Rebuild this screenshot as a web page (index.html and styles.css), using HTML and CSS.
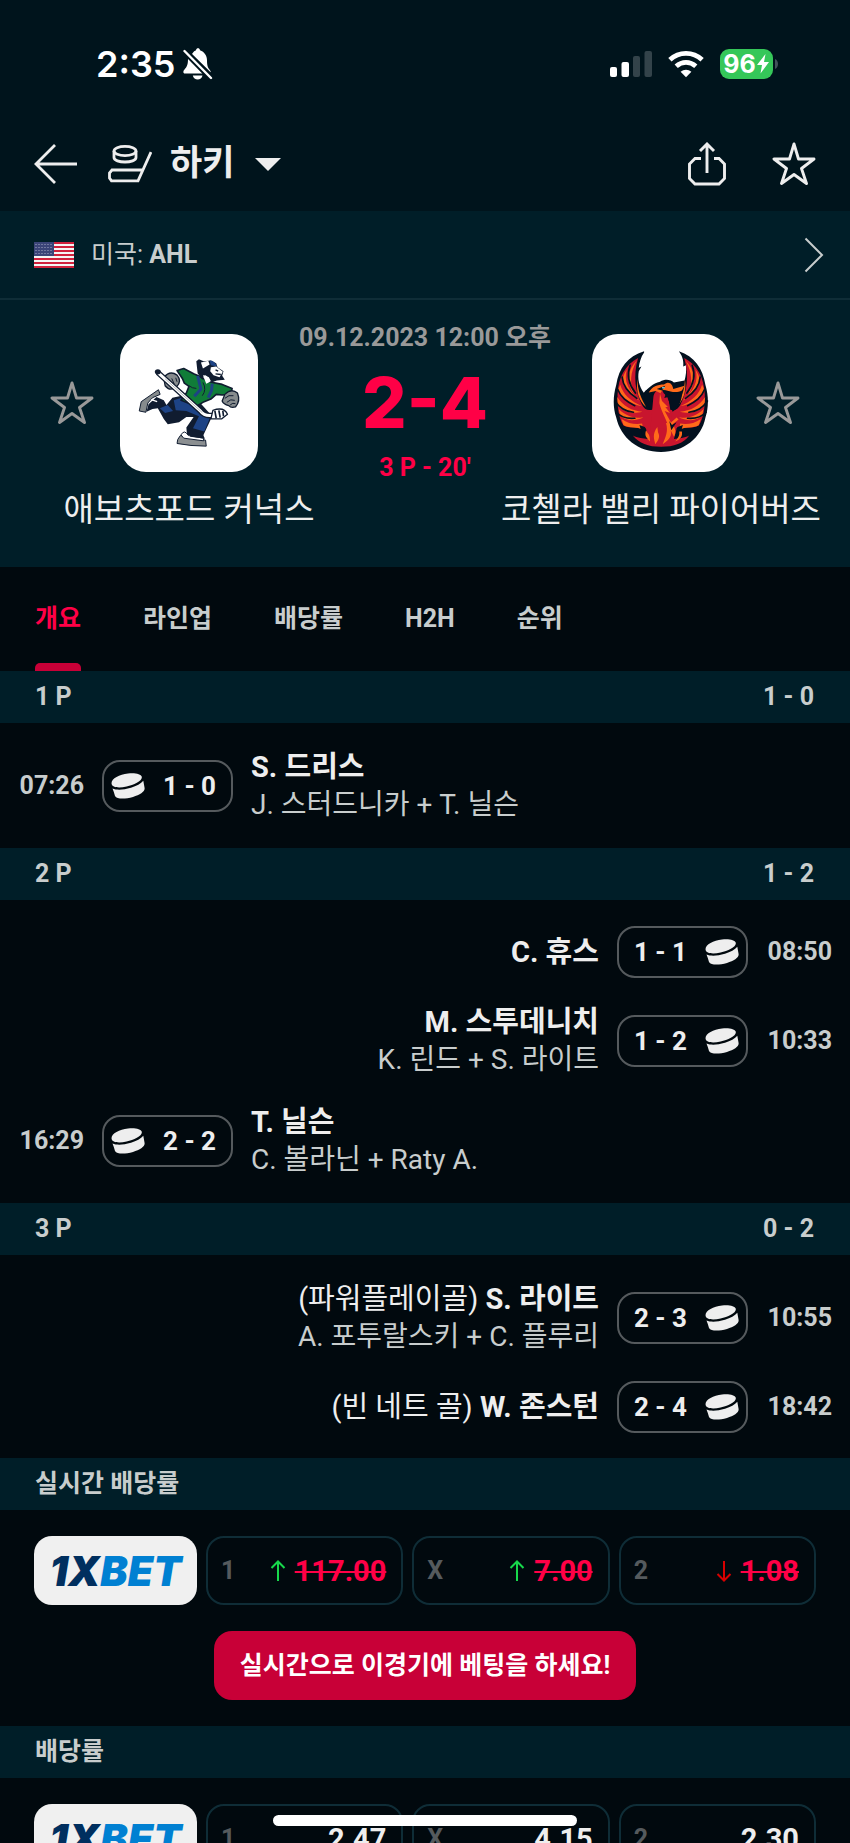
FILE: index.html
```html
<!DOCTYPE html>
<html lang="ko">
<head>
<meta charset="utf-8">
<meta name="viewport" content="width=device-width, initial-scale=1">
<title>하키 - AHL</title>
<link rel="stylesheet" href="styles.css">
</head>
<body>
<svg class="defs" aria-hidden="true">
  <symbol id="star" viewBox="0 0 44 44"><path d="M22 2 L26.500 17 H42 L29.500 26.500 L34.500 41.500 L22 32.500 L9.500 41.500 L14.500 26.500 L2 17 H17.500 Z" fill="none" stroke="currentColor" stroke-width="2.900" stroke-linejoin="round"/></symbol>
  <symbol id="puck" viewBox="0 0 34 26"><path d="M.6 10.800C-.3 6 8 1.300 17 .4c7-.8 13 .4 13.800 3.400C31.600 8 23 12 15.600 13.600 8 15.200 1.200 14.800.6 10.800Z"/><path d="M1.500 15.500c4.500 1.900 11 1.400 18.500-.8 5.500-1.700 10-4 12.300-6.900l1.300 7.200c.5 3.500-4.500 6.800-11.600 8.900C13.500 26.200 5.800 26 4 22.900L2.800 19Z"/></symbol>
  <symbol id="up" viewBox="0 0 16 22"><path d="M8 21V1.500M1.500 8 8 1.500 14.500 8" fill="none" stroke="currentColor" stroke-width="2"/></symbol>
  <symbol id="down" viewBox="0 0 16 22"><path d="M8 1v19.500M1.500 14 8 20.500 14.500 14" fill="none" stroke="currentColor" stroke-width="2"/></symbol>
</svg>

<div class="status">
  <div class="status-side">
    <span class="clock">2:35</span>
    <svg class="bell" viewBox="0 0 30 32"><path d="M9 6C10.500 3.500 12 2.800 13 2.300 13.300.9 14 .3 15 .3s1.700.6 2 2c4.500 1.500 7 5.500 7 10 0 5 .8 7.500 2.800 9.700.8.900 1 1.600.8 2.200ZM5 10.500 19.600 25.500H2C-.2 25.500 0 23 1.300 21.700 4.300 18.700 5 16 5 10.500ZM9.800 27.500h9.700c-.5 2.600-2.500 4-4.800 4s-4.400-1.400-4.900-4Z" fill="#fff"/><path d="M1.500 3 28 30" stroke="#00141c" stroke-width="6"/><path d="M1.500 3 28 30" stroke="#fff" stroke-width="2.400" stroke-linecap="round"/></svg>
  </div>
  <div class="status-side">
    <svg class="signal" viewBox="0 0 42 28"><rect y="17" width="7" height="10" rx="2" fill="#fff"/><rect x="11.500" y="12" width="7.500" height="15" rx="2" fill="#fff"/><rect x="23" y="6" width="7" height="21" rx="2" fill="#33434a"/><rect x="34.500" y="1" width="7.500" height="26" rx="2" fill="#33434a"/></svg>
    <svg class="wifi" viewBox="0 0 36 28"><g fill="none" stroke="#fff" stroke-width="4.800"><path d="M1.900 9.800C11 1.300 25 1.300 34.100 9.800"/><path d="M8.200 16.200c5.800-5.200 13.800-5.200 19.600 0"/></g><path d="M18 27.200 12.600 21.700c3.200-2.700 7.600-2.700 10.800 0Z" fill="#fff"/></svg>
    <div class="battery"><span>96</span><svg class="bolt" viewBox="0 0 14 20"><path d="M9.500 0 1 11h5L4.500 19.500 13 8H8Z" fill="#fff"/></svg></div>
    <svg class="nub" viewBox="0 0 4 10"><path d="M0 0c4 1.500 4 8.500 0 10Z" fill="#42525a"/></svg>
  </div>
</div>

<header class="topbar">
  <button class="icon-btn" aria-label="뒤로"><svg class="back" viewBox="0 0 44 40"><path d="M21 1 2 20l19 19M2 20h41" fill="none" stroke="#eee" stroke-width="2.800"/></svg></button>
  <button class="sport">
    <svg class="hockey" viewBox="0 0 44 38"><g fill="none" stroke="#eee" stroke-width="2.800"><ellipse cx="17" cy="6" rx="11" ry="4.600"/><path d="M6 6v6.500c0 6 22 6 22 0V6M43 7 30 35.800H3.500L1.500 33v-5l2.500-3h31"/></g></svg>
    <span>하키</span>
    <svg class="caret" viewBox="0 0 26 13"><path d="M0 0h26L13 13Z" fill="#eee"/></svg>
  </button>
  <button class="icon-btn push" aria-label="공유"><svg class="share" viewBox="0 0 38 44"><g fill="none" stroke="#eee" stroke-width="2.900"><path d="M13 16.500H7L1.500 22v14.500L7 42h24l5.500-5.500V22L31 16.500h-5M19 31V2M12 9l7-7 7 7"/></g></svg></button>
  <button class="icon-btn" aria-label="즐겨찾기"><svg class="star"><use href="#star"/></svg></button>
</header>

<main class="content">
  <a class="league" href="#">
    <svg class="flag" viewBox="0 0 40 26"><rect width="40" height="26" fill="#f4f4f4"/><path d="M0 1h40M0 5h40M0 9h40M0 13h40M0 17h40M0 21h40M0 25h40" stroke="#d0203c" stroke-width="2"/><rect width="20" height="14" fill="#3a4478"/><path d="M1.500 2.500h18M1.500 5.500h18M1.500 8.500h18M1.500 11.500h18" stroke="#a7abc6" stroke-width="1" stroke-dasharray="1 2"/></svg>
    <span>미국: <b>AHL</b></span>
    <svg class="chev" viewBox="0 0 20 36"><path d="M1.500 1.500 18 18 1.500 34.500" fill="none" stroke="#c8cdcd" stroke-width="2"/></svg>
  </a>

  <section class="match">
    <div class="match-top">
      <div class="team">
        <button class="icon-btn dim" aria-label="애보츠포드 커넉스 즐겨찾기"><svg class="star"><use href="#star"/></svg></button>
        <svg class="crest" viewBox="14 14 416 416">
          <g stroke-linejoin="round">
            <path d="M72 246 78 218 130 182 135 196 112 206 98 222 92 250Z" fill="#868b8d" stroke="#101c30" stroke-width="3"/>
            <path d="M94 248 100 226 124 204 146 214 154 228 172 206 200 200 256 222 292 262 262 326 216 318 214 296 236 264 214 264 192 280 158 286 146 270 128 238 112 240Z" fill="#101c30"/>
            <path d="M108 212l18 6" stroke="#fff" stroke-width="4"/>
            <path d="M134 238 158 228 174 246 150 252ZM176 214 200 206 252 236 286 264 268 308 234 298 252 262 214 246 182 244Z" fill="#1d4385"/>
            <path d="M186 124 206 118 236 134 250 140 282 158 322 166 352 178 348 196 322 198 304 196 288 210 264 220 244 232 198 214 214 192 222 172 208 162 202 148Z" fill="#107c38" stroke="#101c30" stroke-width="5"/>
            <path d="M248 140 258 180 238 202M292 164 290 184 280 206" fill="none" stroke="#1d4385" stroke-width="9"/>
            <path d="M222 170q10 8 22 8M264 160q12 22-2 40" fill="none" stroke="#101c30" stroke-width="3"/>
            <path d="M244 96 252 90 266 96 288 94 304 102 308 114 326 126 322 140 330 152 306 154 290 160 282 144 270 138 262 152 248 132Z" fill="#101c30"/>
            <path d="M258 100 280 95 284 106 264 118ZM264 138l10 2 12 18-12 6Z" fill="#fff"/>
            <path d="M284 94q16 0 22 18l-18-4Z" fill="#1d4385"/>
            <path d="M288 114 304 112 324 128 314 144 296 138 286 126Z" fill="#fff"/>
            <path d="M302 122l8 4M302 134 318 136" stroke="#101c30" stroke-width="4"/>
            <path d="M146 146q18-24 40-8 16 18-2 36-20 14-34-4Z" fill="#868b8d" stroke="#101c30" stroke-width="4"/>
            <path d="M158 154l10 16M170 148l8 18M182 146l4 12" stroke="#101c30" stroke-width="3"/>
            <path d="M330 196q20-20 38-4 10 24-6 42-14 4-20-4-16-4-20-14Z" fill="#868b8d" stroke="#101c30" stroke-width="4"/>
            <path d="M330 208q12-12 26-8M336 220q12-12 24-6M346 228q8-8 16-4" fill="none" stroke="#101c30" stroke-width="3"/>
            <path d="M128 130 256 246q10 14 28 14h32" fill="none" stroke="#101c30" stroke-width="17"/>
            <path d="M130 132 256 246q10 14 28 14h30" fill="none" stroke="#fff" stroke-width="9"/>
            <path d="M150 149 262 251" stroke="#8c9294" stroke-width="2"/>
            <path d="M294 244q34-12 44 12l-18 14-32 0Z" fill="#fff" stroke="#101c30" stroke-width="4"/>
            <path d="M300 246l4 22M312 244l4 22M324 246l2 16" stroke="#101c30" stroke-width="5"/>
            <ellipse cx="128" cy="128" rx="9" ry="8" fill="#101c30"/>
            <path d="M188 332 196 320 272 334 274 352Q226 352 186 344Z" fill="#8b8f91" stroke="#101c30" stroke-width="3"/>
            <path d="M198 318q10-18 22 2l46 8 0 8-60-8Z" fill="#fff" stroke="#101c30" stroke-width="3"/>
            <path d="M218 304 262 312 270 330 226 324Z" fill="#101c30"/>
          </g>
        </svg>
      </div>
      <div class="result">
        <span class="date">09.12.2023 12:00 오후</span>
        <span class="score">2-4</span>
        <span class="stage">3 P - 20'</span>
      </div>
      <div class="team">
        <svg class="crest" viewBox="21 14 416 416">
          <defs>
            <g id="wing">
              <path d="M160 86C122 106 100 144 98 196c-1 40 4 72 18 94 22 10 44 4 60 8l26 34h30V210l-24-6-6 38c-14 4-24-2-30-14-20-40-28-86-12-142Z" fill="#c8152e"/>
              <g fill="#ff6a1a">
                <path d="M156 94c-28 28-34 66-8 102-14-34-12-66 8-102Z"/>
                <path d="M126 122c-10 32 4 64 40 94-30-16-52-46-52-66 2-12 6-20 12-28Z"/>
                <path d="M106 166c8 30 32 50 66 66-38-8-62-28-72-50Z"/>
                <path d="M97 204c18 28 44 42 76 44-40 10-62-4-74-20Z"/>
                <path d="M102 240c20 22 46 28 74 26-34 14-56 8-70-6Z"/>
                <path d="M110 270c20 14 42 18 62 14l4 20c-20-14-44-4-60-16Z"/>
                <path d="M158 150c0 34 12 60 26 84-20-16-32-46-26-84Z"/>
              </g>
              <g fill="none" stroke="#03111f" stroke-width="5" stroke-linecap="round">
                <path d="M136 108c-12 32-4 58 16 84M112 144c2 28 20 48 44 64M98 180c10 26 28 38 52 50M90 216c16 24 34 32 56 34M94 250c16 16 36 20 56 18"/>
              </g>
              <path d="M164 288l16 6 18 26-16-8-8 12Z" fill="#03111f"/>
            </g>
          </defs>
          <path d="M178 66C128 82 102 116 94 168c-10 34-10 68 0 98 14 62 66 104 135 104s122-42 134-104c10-30 10-64 0-98-8-52-34-86-80-102 14 20 14 34 13 46l8-4c2 16 0 32-4 46l-32 6c-12-10-28-10-42-2-22 6-36 18-48 34-16-22-20-44-16-66l8-14-8 4c2-16 6-32 16-46Z" fill="#03111f"/>
          <use href="#wing"/>
          <use href="#wing" transform="translate(459 0) scale(-1 1)"/>
          <path d="M178 190c10-14 20-10 24 4l6 12-4 36c-14-4-26-24-26-52ZM248 204l32-14 12 6c-2 26-14 44-28 52Z" fill="#03111f"/>
          <path d="M206 204c2-14 10-22 22-26l14 20-6 18 22 30 10 60-38 30-34-28 6-60Z" fill="#c8152e"/>
          <path d="M192 190c10-18 26-24 46-24 16-12 26 0 28 14l34-10-8 14c-14 8-34 4-46 0l-12-2-8 12 6 22 18 18-8 0 14 18-16-6 22 40-12 2c-12-30-22-48-26-66l2-30-12-6Z" fill="#ff6a1a"/>
          <path d="M216 180l26-10-10 14ZM240 184l20 6-12 8-12-6Z" fill="#03111f"/>
          <path d="M232 176h8" stroke="#62c6d8" stroke-width="4"/>
          <path d="M144 320c26 16 144 16 170 0-16 24-46 34-85 34s-66-10-85-34Z" fill="#c8152e"/>
          <path d="M184 300l12 38 34 14 36-14 10-38-18 8-28-10-26 10Z" fill="#c8152e"/>
          <path d="M218 294c-16 22-10 36-6 52 12-16 14-24 8-36ZM244 282c8 26-2 44-10 64 24-16 28-28 24-42l10 20c8-14 4-26-4-38l18-14-6-6-20 18ZM184 304c-6 18 2 22 12 34 0-10-2-20-6-24ZM284 308c2 14-6 22-12 30 18-8 22-16 20-30Z" fill="#ff6a1a"/>
          <path d="M254 276l8 12 14-8-16 24Z" fill="#03111f"/>
        </svg>
        <button class="icon-btn dim" aria-label="코첼라 밸리 파이어버즈 즐겨찾기"><svg class="star"><use href="#star"/></svg></button>
      </div>
    </div>
    <div class="names"><span>애보츠포드 커넉스</span><span>코첼라 밸리 파이어버즈</span></div>
  </section>

  <nav class="tabs">
    <a class="tab active" href="#">개요</a>
    <a class="tab" href="#">라인업</a>
    <a class="tab" href="#">배당률</a>
    <a class="tab" href="#">H2H</a>
    <a class="tab" href="#">순위</a>
  </nav>

  <h2 class="bar"><span>1 P</span><span>1 - 0</span></h2>
  <div class="events">
    <div class="event"><time>07:26</time><div class="pill"><svg><use href="#puck"/></svg><span>1 - 0</span></div><div class="who"><b>S. 드리스</b><span>J. 스터드니카 + T. 닐슨</span></div></div>
  </div>

  <h2 class="bar"><span>2 P</span><span>1 - 2</span></h2>
  <div class="events">
    <div class="event away"><time>08:50</time><div class="pill"><svg><use href="#puck"/></svg><span>1 - 1</span></div><div class="who"><b>C. 휴스</b></div></div>
    <div class="event away"><time>10:33</time><div class="pill"><svg><use href="#puck"/></svg><span>1 - 2</span></div><div class="who"><b>M. 스투데니치</b><span>K. 린드 + S. 라이트</span></div></div>
    <div class="event"><time>16:29</time><div class="pill"><svg><use href="#puck"/></svg><span>2 - 2</span></div><div class="who"><b>T. 닐슨</b><span>C. 볼라닌 + Raty A.</span></div></div>
  </div>

  <h2 class="bar"><span>3 P</span><span>0 - 2</span></h2>
  <div class="events">
    <div class="event away"><time>10:55</time><div class="pill"><svg><use href="#puck"/></svg><span>2 - 3</span></div><div class="who"><b><i>(파워플레이골)</i> S. 라이트</b><span>A. 포투랄스키 + C. 플루리</span></div></div>
    <div class="event away"><time>18:42</time><div class="pill"><svg><use href="#puck"/></svg><span>2 - 4</span></div><div class="who"><b><i>(빈 네트 골)</i> W. 존스턴</b></div></div>
  </div>

  <h2 class="bar"><span>실시간 배당률</span></h2>
  <div class="odds-block">
    <div class="odds">
      <a class="bookie" href="#"><span class="navy">1X</span>BET</a>
      <button class="odd"><span class="pick">1</span><svg class="up"><use href="#up"/></svg><s>117.00</s></button>
      <button class="odd"><span class="pick">X</span><svg class="up"><use href="#up"/></svg><s>7.00</s></button>
      <button class="odd"><span class="pick">2</span><svg class="down"><use href="#down"/></svg><s>1.08</s></button>
    </div>
    <button class="cta">실시간으로 이경기에 베팅을 하세요!</button>
  </div>

  <h2 class="bar"><span>배당률</span></h2>
  <div class="odds-block">
    <div class="odds">
      <a class="bookie" href="#"><span class="navy">1X</span>BET</a>
      <button class="odd"><span class="pick">1</span><span>2.47</span></button>
      <button class="odd"><span class="pick">X</span><span>4.15</span></button>
      <button class="odd"><span class="pick">2</span><span>2.30</span></button>
    </div>
  </div>
</main>
<div class="home"></div>
</body>
</html>
```
FILE: styles.css
```css
* { box-sizing: border-box; }

body {
  margin: 0;
  height: 100vh;
  display: flex;
  flex-direction: column;
  overflow: hidden;
  background: #00141c;
  color: #eee;
  font-family: Roboto, "Noto Sans CJK KR", sans-serif;
  font-size: 25px;
  line-height: 36px;
}

button {
  font: inherit;
  color: inherit;
  background: none;
  border: 0;
  padding: 0;
}

a { color: inherit; text-decoration: none; }
svg { display: block; flex: none; }
.defs { position: absolute; width: 0; height: 0; }

.status {
  flex: none;
  display: flex;
  justify-content: space-between;
  align-items: center;
  height: 128px;
  padding: 0 71px 0 96px;
  font-family: Inter, sans-serif;
  color: #fff;
}
.status-side { display: flex; align-items: center; }
.clock { font-size: 36px; font-weight: 600; line-height: 34px; }
.bell { width: 30px; height: 32px; margin-left: 8px; }
.signal { width: 42px; height: 28px; margin-right: 16px; }
.wifi { width: 36px; height: 28px; margin-right: 16px; }
.battery {
  display: flex;
  align-items: center;
  justify-content: center;
  width: 53px;
  height: 30px;
  border-radius: 9px;
  background: #35c759;
  font-size: 25px;
  font-weight: 700;
}
.bolt { width: 14px; height: 20px; }
.nub { width: 4px; height: 10px; margin-left: 2px; }

.topbar {
  flex: none;
  display: flex;
  align-items: center;
  height: 83px;
  padding: 0 34px 11px;
}
.push { margin-left: auto; margin-right: 46px; }
.back { width: 44px; height: 40px; }
.share { width: 38px; height: 44px; }
.star { width: 44px; height: 44px; }
.sport {
  display: flex;
  align-items: center;
  gap: 18px;
  margin-left: 30px;
  font-size: 35px;
  font-weight: 700;
}
.hockey { width: 44px; height: 38px; }
.caret { width: 26px; height: 13px; margin-left: 3px; }

.content { flex: 1; min-height: 0; overflow: auto; scrollbar-width: none; background: #01090e; }

.league {
  display: flex;
  align-items: center;
  gap: 17px;
  height: 89px;
  padding: 0 26px 0 34px;
  background: #001e28;
  border-bottom: 2px solid #0f2d37;
  color: #c8cdcd;
}
.flag { width: 40px; height: 26px; }
.chev { width: 20px; height: 36px; margin-left: auto; }

.match { padding: 24px 0 39px; background: #001e28; }
.match-top { display: flex; align-items: center; justify-content: space-between; padding: 0 50px; }
.team { display: flex; align-items: center; gap: 26px; }
.dim { color: #999; }
.crest { width: 138px; height: 138px; border-radius: 26px; background: #fff; }
.result { display: flex; flex-direction: column; align-items: center; font-weight: 700; line-height: 28px; white-space: nowrap; }
.date { color: #999; }
.score { color: #ff0046; font: 800 70px/102px Inter, sans-serif; }
.stage { color: #ff0046; }
.names { display: flex; gap: 94px; margin-top: 8px; font-size: 33px; line-height: 40px; }
.names span { flex: 1; text-align: center; white-space: nowrap; }
.names { margin-bottom: -2px; }

.tabs { display: flex; gap: 62px; height: 104px; padding: 0 35px; }
.tab {
  display: flex;
  align-items: center;
  position: relative;
  color: #c8cdcd;
  font-weight: 700;
}
.active { color: #ff0046; }
.active::after {
  content: "";
  position: absolute;
  inset: auto 0 0;
  height: 8px;
  border-radius: 5px 5px 0 0;
  background: #c80037;
}

.bar {
  display: flex;
  justify-content: space-between;
  align-items: center;
  height: 52px;
  margin: 0;
  padding: 0 36px 0 35px;
  background: #001e28;
  color: #c8cdcd;
  font-size: 25px;
  font-weight: 700;
}

.events { display: flex; flex-direction: column; gap: 26px; padding: 26px 18px 25px; }
.event { display: flex; align-items: center; gap: 18px; }
.event time { width: 66px; color: #c8cdcd; font-weight: 700; text-align: right; }
.away { flex-direction: row-reverse; text-align: right; }
.pill {
  display: flex;
  align-items: center;
  gap: 18px;
  width: 131px;
  height: 52px;
  padding: 0 7px;
  border: 2px solid #555a5d;
  border-radius: 18px;
  font-size: 26px;
  font-weight: 700;
}
.pill svg { width: 34px; height: 26px; fill: #eee; }
.away .pill { flex-direction: row-reverse; }
.who { display: flex; flex-direction: column; font-size: 29px; line-height: 37px; }
.who i { font-style: normal; font-weight: 400; }
.who span { color: #c8cdcd; font-weight: 400; font-size: 28px; }

.odds-block { display: flex; flex-direction: column; align-items: center; gap: 26px; padding: 26px 34px; }
.odds { display: grid; grid-template-columns: 163px 1fr 1fr 1fr; gap: 9px; width: 100%; }
.bookie {
  display: flex;
  align-items: center;
  justify-content: center;
  height: 69px;
  border-radius: 18px;
  background: #f0f0f0;
  color: #0080d2;
  font: italic 900 41px/40px Inter, sans-serif;
}
.navy { color: #002f5f; }
.odd {
  display: flex;
  align-items: center;
  height: 69px;
  padding: 0 15px 0 13px;
  border: 2px solid #0f2d37;
  border-radius: 18px;
  font-size: 29px;
  font-weight: 700;
}
.odd s { color: #ff0046; }
.odd svg { width: 16px; height: 22px; margin-right: 9px; }
.up { color: #17d84b; }
.down { color: #d80000; }
.pick { margin-right: auto; color: #555a5d; font-size: 25px; font-weight: 700; }
.cta {
  height: 69px;
  padding: 0 26px;
  border-radius: 18px;
  background: #c80037;
  color: #fff;
  font-weight: 700;
}

.home {
  position: fixed;
  left: 50%;
  bottom: 17px;
  width: 304px;
  height: 11px;
  margin-left: -152px;
  border-radius: 6px;
  background: #fff;
}
```
